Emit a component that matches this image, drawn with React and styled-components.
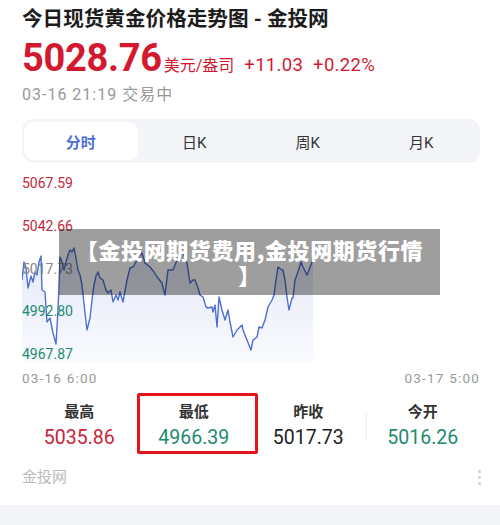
import React from "react";
import styled, { createGlobalStyle } from "styled-components";

const GlobalStyle = createGlobalStyle`
  body {
    margin: 0;
    background: #fff;
    font-family: Roboto, "Noto Sans CJK SC", sans-serif;
  }
`;

const Page = styled.div`
  width: 500px;
  height: 525px;
  overflow: hidden;
  display: flex;
  flex-direction: column;
`;

const Content = styled.div`
  padding: 5px 20px 0 22px;
  display: flex;
  flex-direction: column;
`;

const Title = styled.h1`
  margin: 0;
  font-size: 20.6px;
  line-height: 28px;
  font-weight: 700;
  color: #1c1c1c;
`;

const PriceRow = styled.div`
  display: flex;
  align-items: baseline;
  margin-top: 3px;
  color: #d3192f;
`;

const Price = styled.span`
  font-size: 38px;
  line-height: 44px;
  font-weight: 700;
  letter-spacing: -0.3px;
`;

const Unit = styled.span`
  font-size: 16px;
  margin-left: 2px;
`;

const Change = styled.span`
  font-size: 18.5px;
  margin-left: 10px;
  letter-spacing: 0.3px;
`;

const Status = styled.div`
  margin-top: 5px;
  font-size: 16px;
  line-height: 20px;
  letter-spacing: 1px;
  color: #999;
`;

const Tabs = styled.div`
  margin-top: 14px;
  height: 44px;
  box-sizing: border-box;
  padding: 3px 2px;
  border-radius: 12px;
  background: #f4f5f9;
  display: grid;
  grid-template-columns: repeat(4, 1fr);
`;

const Tab = styled.div`
  display: flex;
  align-items: center;
  justify-content: center;
  border-radius: 10px;
  font-size: 15px;
  background: ${({ $active }) => ($active ? "#fff" : "transparent")};
  color: ${({ $active }) => ($active ? "#4d6fd4" : "#333")};
  font-weight: ${({ $active }) => ($active ? 700 : 400)};
`;

const Chart = styled.div`
  position: relative;
  margin-top: 12px;
  height: 187px;
`;

const Plot = styled.svg`
  position: absolute;
  left: 0;
  top: 0;
`;

const YAxis = styled.div`
  position: relative;
  height: 100%;
  display: flex;
  flex-direction: column;
  justify-content: space-between;
`;

const YLabel = styled.span`
  font-size: 14px;
  line-height: 16px;
  color: ${({ $c }) => $c};
`;

const Banner = styled.div`
  position: absolute;
  left: 37px;
  top: 54px;
  width: 381px;
  height: 66px;
  box-sizing: border-box;
  padding-top: 8px;
  background: rgba(0, 0, 0, 0.38);
  color: #fff;
  font-family: "Noto Sans CJK SC", sans-serif;
  font-size: 22px;
  font-weight: 900;
  line-height: 25px;
  letter-spacing: 0.6px;
  text-align: center;
  white-space: nowrap;
`;

const TimeAxis = styled.div`
  margin-top: 8px;
  display: flex;
  justify-content: space-between;
  font-size: 13.5px;
  line-height: 16px;
  letter-spacing: 1.2px;
  color: #999;
`;

const Stats = styled.div`
  position: relative;
  margin-top: 7px;
  display: grid;
  grid-template-columns: repeat(4, 1fr);
`;

const Stat = styled.div`
  position: relative;
  display: flex;
  flex-direction: column;
  align-items: center;
  gap: 4px;
  padding: 9px 0 4px;

  & + &::before {
    content: "";
    position: absolute;
    left: 0;
    top: 19px;
    width: 1px;
    height: 28px;
    background: #f0f0f2;
  }
`;

const StatLabel = styled.span`
  font-size: 15px;
  line-height: 20px;
  font-weight: 600;
  color: #333;
`;

const StatValue = styled.span`
  font-size: 19.5px;
  line-height: 24px;
  color: ${({ $c }) => $c};
`;

const Highlight = styled.div`
  position: absolute;
  left: 115px;
  top: 0;
  width: 121px;
  height: 61px;
  box-sizing: border-box;
  border: 3px solid #e3141c;
  border-radius: 2px;
`;

const Footer = styled.div`
  margin-top: 13px;
  display: flex;
  align-items: center;
  justify-content: space-between;
  font-size: 15px;
  line-height: 20px;
  color: #bbb;
`;

const Dots = styled.div`
  display: flex;
  flex-direction: column;
  gap: 3px;
  margin-right: -1px;

  span {
    width: 3px;
    height: 3px;
    border-radius: 1px;
    background: #d5d6de;
  }
`;

const Band = styled.div`
  margin-top: 18px;
  flex: 1;
  background: #f4f5f9;
`;

const RED = "#c0283f";
const GREEN = "#208a70";

const raw = [
  22, 280, 24, 262, 26, 268, 28, 288, 31, 276, 33, 282, 35, 272, 37, 275, 39, 262, 41, 256,
  42, 290, 45, 292, 47, 322, 50, 318, 53, 333, 56, 344, 58, 310, 60, 257, 62, 262, 64, 270,
  66, 262, 68, 255, 70, 250, 72, 252, 74, 248, 76, 258, 78, 270, 80, 275, 82, 285, 85, 313,
  87, 330, 90, 318, 92, 300, 94, 285, 96, 276, 98, 272, 100, 278, 103, 280, 106, 290, 108, 293,
  111, 290, 113, 302, 116, 295, 118, 300, 120, 292, 123, 302, 127, 280, 130, 268, 133, 267,
  136, 262, 138, 257, 142, 253, 145, 263, 150, 267, 154, 272, 157, 277, 162, 283, 165, 295,
  168, 270, 173, 270, 177, 260, 180, 250, 183, 253, 187, 263, 190, 283, 193, 280, 195, 280,
  198, 288, 200, 295, 203, 297, 206, 307, 208, 308, 212, 307, 213, 312, 215, 305, 217, 327,
  219, 297, 222, 310, 225, 320, 228, 310, 230, 322, 233, 337, 237, 330, 242, 325, 243, 330,
  247, 340, 251, 350, 253, 340, 257, 337, 259, 327, 262, 328, 265, 320, 268, 307, 272, 300,
  274, 295, 276, 280, 278, 267, 282, 270, 283, 270, 285, 280, 287, 297, 289, 310, 292, 298,
  293, 298, 295, 280, 298, 272, 301, 262, 303, 267, 307, 275, 309, 270, 312, 262, 313, 255,
];

// page coords -> chart coords
const pts = [];
for (let i = 0; i < raw.length; i += 2) pts.push([raw[i] - 22, raw[i + 1] - 175]);
const line = pts.map((p) => p.join(",")).join(" ");
const area = `0,187 ${line} ${pts[pts.length - 1][0]},187`;

const tabs = ["分时", "日K", "周K", "月K"];

const stats = [
  { label: "最高", value: "5035.86", color: "#c8243a" },
  { label: "最低", value: "4966.39", color: GREEN },
  { label: "昨收", value: "5017.73", color: "#222" },
  { label: "今开", value: "5016.26", color: GREEN },
];

export default function App() {
  return (
    <Page>
      <GlobalStyle />
      <Content>
        <Title>今日现货黄金价格走势图 - 金投网</Title>
        <PriceRow>
          <Price>5028.76</Price>
          <Unit>美元/盎司</Unit>
          <Change>+11.03</Change>
          <Change>+0.22%</Change>
        </PriceRow>
        <Status>03-16 21:19 交易中</Status>

        <Tabs>
          {tabs.map((t, i) => (
            <Tab key={t} $active={i === 0}>
              {t}
            </Tab>
          ))}
        </Tabs>

        <Chart>
          <Plot width="458" height="187" viewBox="0 0 458 187">
            <defs>
              <linearGradient id="fill" x1="0" y1="0" x2="0" y2="1">
                <stop offset="0" stopColor="#4d6fd4" stopOpacity="0.16" />
                <stop offset="1" stopColor="#4d6fd4" stopOpacity="0.03" />
              </linearGradient>
            </defs>
            <polygon points={area} fill="url(#fill)" />
            <polyline points={line} fill="none" stroke="#4d6fd4" strokeWidth="1.4" strokeLinejoin="round" />
          </Plot>
          <YAxis>
            <YLabel $c={RED}>5067.59</YLabel>
            <YLabel $c={RED}>5042.66</YLabel>
            <YLabel $c="#888">5017.73</YLabel>
            <YLabel $c={GREEN}>4992.80</YLabel>
            <YLabel $c={GREEN}>4967.87</YLabel>
          </YAxis>
          <Banner>
            【金投网期货费用,金投网期货行情
            <br />】
          </Banner>
        </Chart>

        <TimeAxis>
          <span>03-16 6:00</span>
          <span>03-17 5:00</span>
        </TimeAxis>

        <Stats>
          {stats.map((s) => (
            <Stat key={s.label}>
              <StatLabel>{s.label}</StatLabel>
              <StatValue $c={s.color}>{s.value}</StatValue>
            </Stat>
          ))}
          <Highlight />
        </Stats>

        <Footer>
          <span>金投网</span>
          <Dots>
            <span />
            <span />
            <span />
          </Dots>
        </Footer>
      </Content>
      <Band />
    </Page>
  );
}
